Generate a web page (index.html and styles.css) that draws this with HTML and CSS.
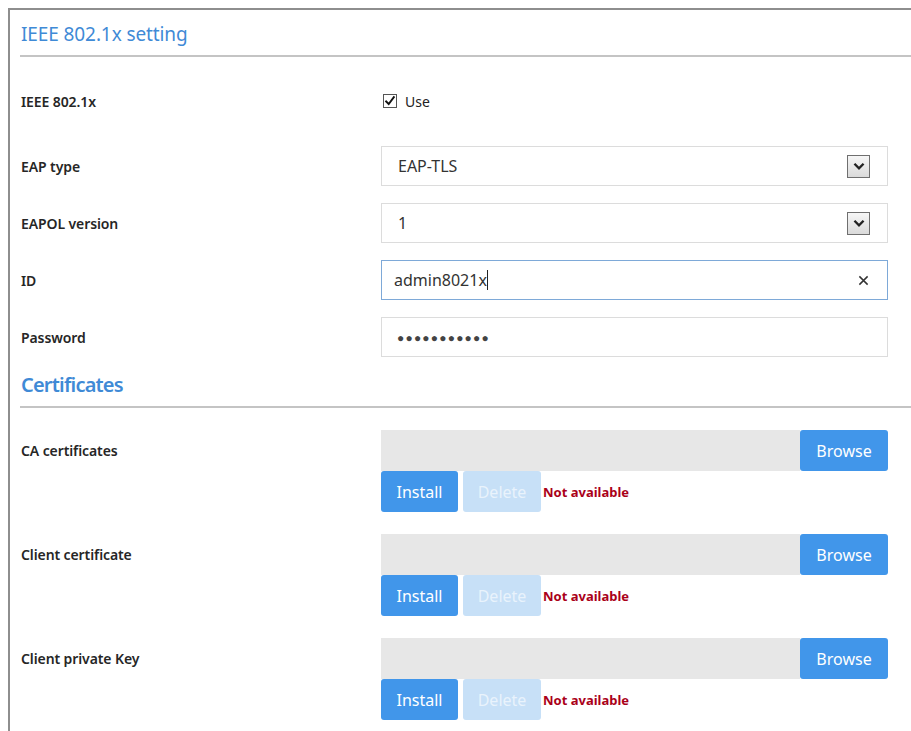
FILE: index.html
```html
<!DOCTYPE html>
<html lang="en">
<head>
<meta charset="utf-8">
<title>IEEE 802.1x setting</title>
<link rel="stylesheet" href="styles.css">
</head>
<body>
<div class="panel">
  <h2 class="panel-title">IEEE 802.1x setting</h2>

  <div class="form">
    <div class="row row-first">
      <div class="label">IEEE 802.1x</div>
      <label class="check">
        <span class="check-box">
          <svg viewBox="0 0 14 14" width="12" height="12"><polyline points="2.5,7.5 5.5,10.5 11.5,2.5" fill="none" stroke="#111" stroke-width="2.2" stroke-linecap="square"/></svg>
        </span>
        <span class="check-text">Use</span>
      </label>
    </div>

    <div class="row">
      <div class="label">EAP type</div>
      <div class="field select">
        <span class="field-value">EAP-TLS</span>
        <span class="select-arrow">
          <svg viewBox="0 0 22 22" width="20" height="20"><polyline points="6,8.5 11,13.5 16,8.5" fill="none" stroke="#222" stroke-width="2.6"/></svg>
        </span>
      </div>
    </div>

    <div class="row">
      <div class="label">EAPOL version</div>
      <div class="field select">
        <span class="field-value">1</span>
        <span class="select-arrow">
          <svg viewBox="0 0 22 22" width="20" height="20"><polyline points="6,8.5 11,13.5 16,8.5" fill="none" stroke="#222" stroke-width="2.6"/></svg>
        </span>
      </div>
    </div>

    <div class="row">
      <div class="label">ID</div>
      <div class="field text focused">
        <span class="field-value">admin8021x<span class="caret"></span></span>
        <span class="clear">
          <svg viewBox="0 0 12 12" width="11" height="11"><path d="M1.5 1.5 L10.5 10.5 M10.5 1.5 L1.5 10.5" stroke="#333" stroke-width="1.6"/></svg>
        </span>
      </div>
    </div>

    <div class="row">
      <div class="label">Password</div>
      <div class="field text">
        <span class="field-value dots">●●●●●●●●●●●</span>
      </div>
    </div>
  </div>

  <h3 class="section-title">Certificates</h3>

  <div class="certs">
    <div class="cert">
      <div class="label">CA certificates</div>
      <div class="cert-controls">
        <div class="file">
          <span class="file-name"></span>
          <button class="btn btn-browse">Browse</button>
        </div>
        <div class="actions">
          <button class="btn btn-install">Install</button>
          <button class="btn btn-delete">Delete</button>
          <span class="status">Not available</span>
        </div>
      </div>
    </div>

    <div class="cert">
      <div class="label">Client certificate</div>
      <div class="cert-controls">
        <div class="file">
          <span class="file-name"></span>
          <button class="btn btn-browse">Browse</button>
        </div>
        <div class="actions">
          <button class="btn btn-install">Install</button>
          <button class="btn btn-delete">Delete</button>
          <span class="status">Not available</span>
        </div>
      </div>
    </div>

    <div class="cert">
      <div class="label">Client private Key</div>
      <div class="cert-controls">
        <div class="file">
          <span class="file-name"></span>
          <button class="btn btn-browse">Browse</button>
        </div>
        <div class="actions">
          <button class="btn btn-install">Install</button>
          <button class="btn btn-delete">Delete</button>
          <span class="status">Not available</span>
        </div>
      </div>
    </div>
  </div>
</div>
</body>
</html>
```

FILE: styles.css
```css
html, body {
  margin: 0;
  padding: 0;
  background: #ffffff;
}

body {
  font-family: "Noto Sans", "Open Sans", sans-serif;
  color: #222;
  overflow: hidden;
}

.panel {
  margin: 8px 0 0 8px;
  border-top: 2px solid #8e8e8e;
  border-left: 2px solid #8e8e8e;
  padding-left: 10px;
  height: 740px;
  box-sizing: border-box;
}

.panel-title {
  margin: 0;
  height: 47px;
  line-height: 49px;
  padding-left: 1px;
  font-size: 19px;
  font-weight: 400;
  letter-spacing: -0.1px;
  color: #3f8ad6;
  border-bottom: 2px solid #c4c4c4;
  box-sizing: border-box;
}

.form {
  padding-top: 24px;
}

.row {
  display: grid;
  grid-template-columns: 361px 507px;
  align-items: center;
  height: 40px;
  margin-bottom: 17px;
}

.row:last-child {
  margin-bottom: 0;
}

.row-first {
  margin-bottom: 25px;
}

.label {
  padding-left: 1px;
  font-size: 14px;
  font-weight: 600;
  color: #262626;
  letter-spacing: -0.1px;
}

/* checkbox */
.check {
  display: flex;
  align-items: center;
  gap: 8px;
  padding-left: 2px;
}

.check-box {
  width: 12px;
  height: 12px;
  border: 1px solid #555;
  display: flex;
  align-items: center;
  justify-content: center;
  background: #fff;
}

.check-text {
  font-size: 14px;
  color: #222;
}

/* inputs and selects */
.field {
  height: 40px;
  box-sizing: border-box;
  border: 1px solid #dcdcdc;
  display: flex;
  align-items: center;
  justify-content: space-between;
  font-size: 16px;
  color: #333;
}

.select {
  padding: 0 17px 0 16px;
}

.text {
  padding: 0 18px 0 12px;
}

.focused {
  border-color: #7ea9d8;
}

.caret {
  display: inline-block;
  width: 1px;
  height: 20px;
  background: #222;
  vertical-align: -4px;
}

.dots {
  font-size: 12px;
  letter-spacing: 1.2px;
  color: #444;
  padding-left: 3px;
}

.select-arrow {
  width: 23px;
  height: 23px;
  box-sizing: border-box;
  border: 1px solid #6f6f6f;
  background: linear-gradient(#f6f6f6, #dadada);
  display: flex;
  align-items: center;
  justify-content: center;
}

.clear {
  display: flex;
  align-items: center;
}

/* certificates */
.section-title {
  margin: 5px 0 0 0;
  height: 44px;
  line-height: 46px;
  padding-left: 1px;
  font-size: 20px;
  font-weight: 600;
  letter-spacing: -0.8px;
  color: #3f8ad6;
  border-bottom: 2px solid #c4c4c4;
  box-sizing: content-box;
}

.certs {
  padding-top: 22px;
}

.cert {
  display: grid;
  grid-template-columns: 361px 507px;
  align-items: start;
  margin-bottom: 22px;
}

.cert .label {
  line-height: 41px;
}

.file {
  display: flex;
  height: 41px;
}

.file-name {
  flex: 1;
  background: #e7e7e7;
}

.btn {
  border: none;
  font-family: "Noto Sans", "Open Sans", sans-serif;
  font-size: 16px;
  color: #fff;
  padding: 0;
  border-radius: 3px;
  cursor: pointer;
}

.btn-browse {
  width: 88px;
  background: #4196ea;
}

.actions {
  display: flex;
  align-items: center;
  height: 41px;
}

.btn-install {
  width: 77px;
  height: 41px;
  background: #4196ea;
}

.btn-delete {
  width: 78px;
  height: 41px;
  margin-left: 5px;
  background: #c7e0f7;
  color: #e9f3fc;
}

.status {
  margin-left: 2px;
  font-size: 13px;
  font-weight: 700;
  color: #aa0019;
}
```
